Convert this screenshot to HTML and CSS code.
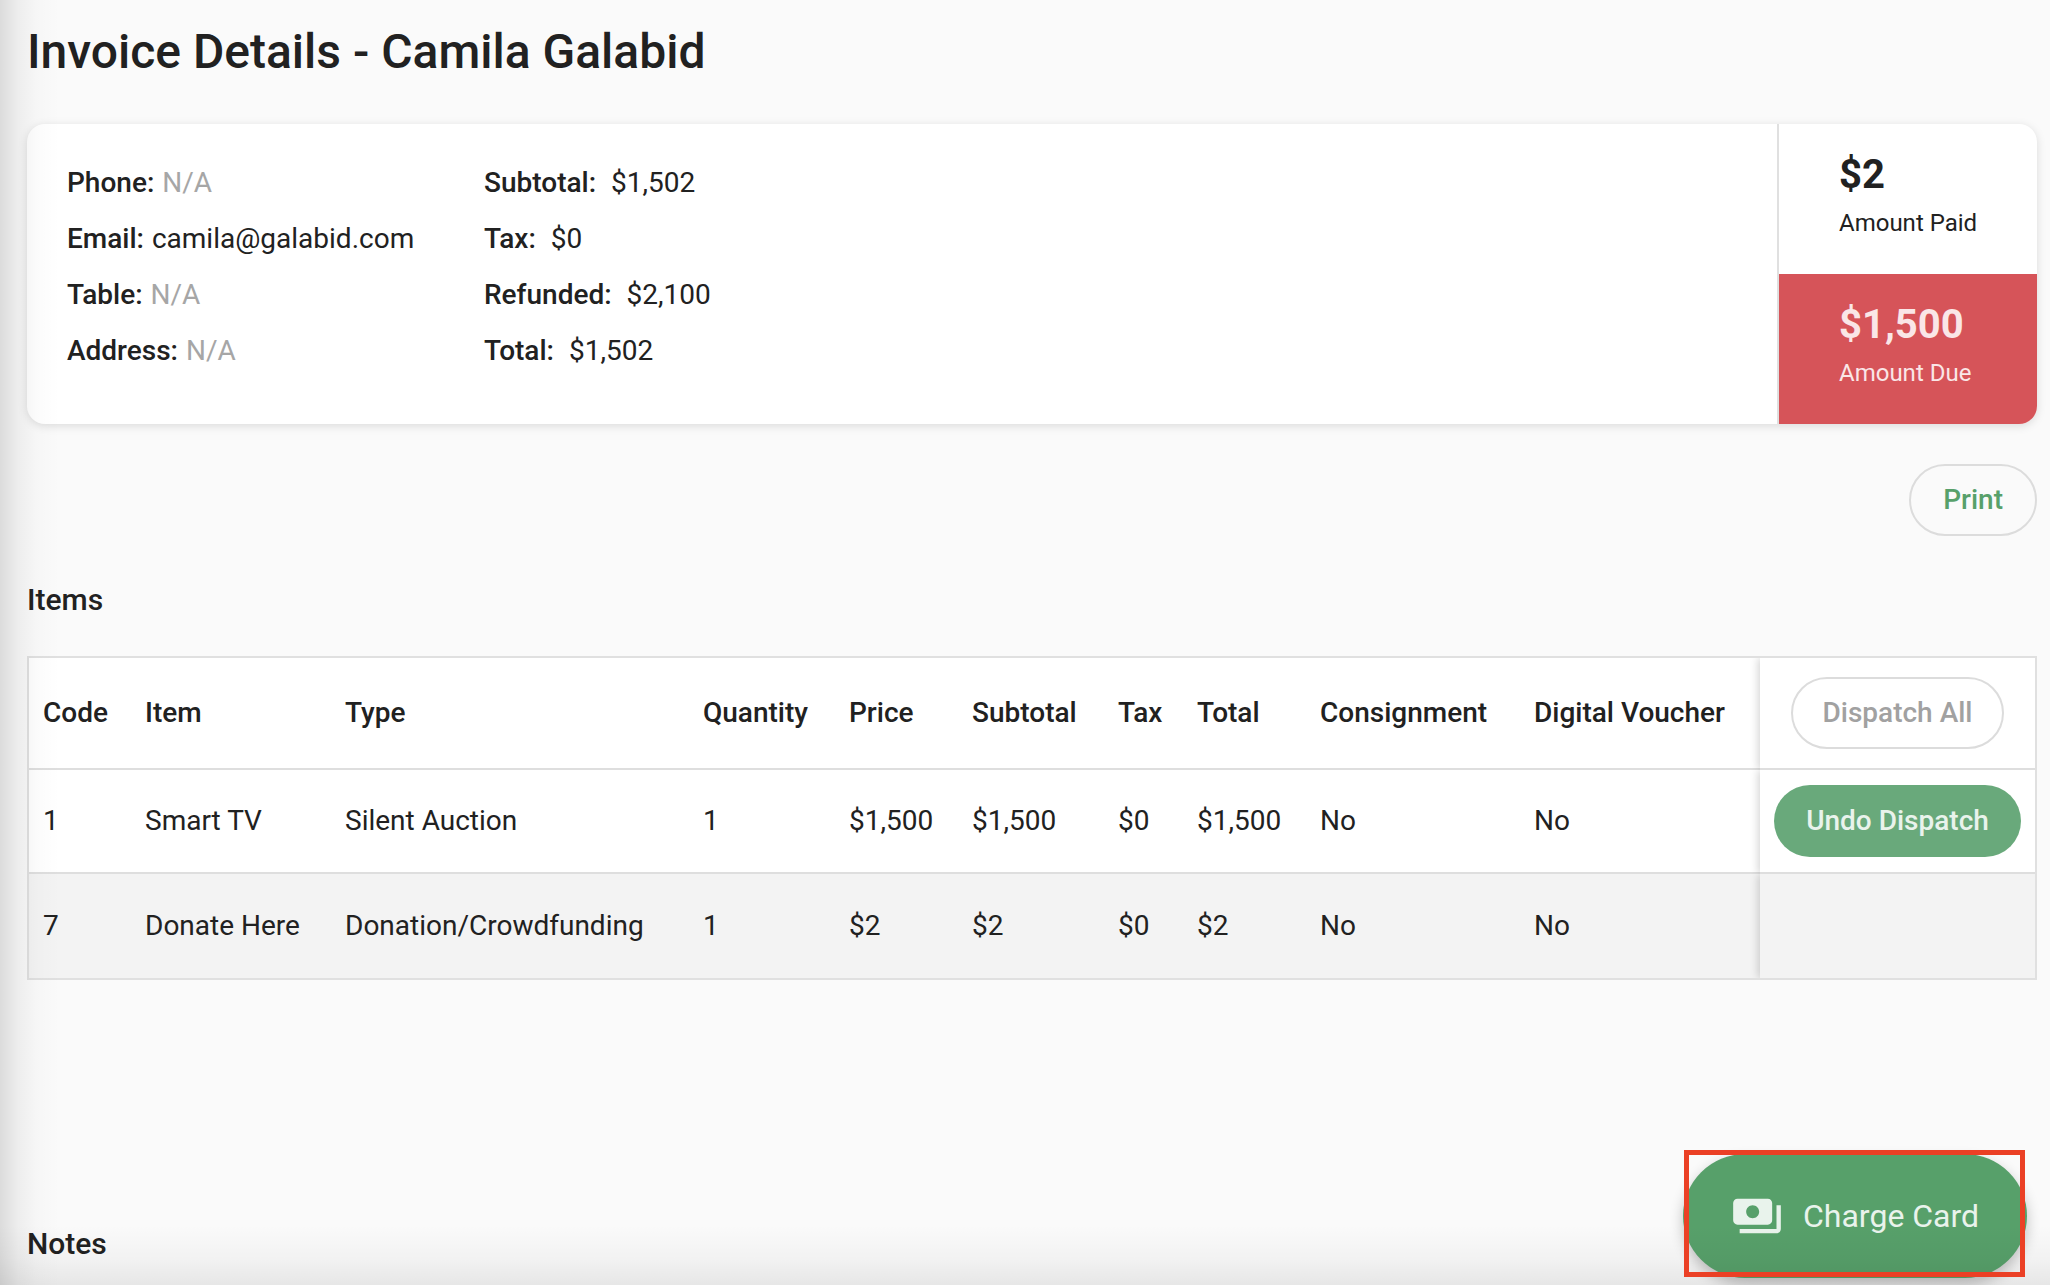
FILE: index.html
```html
<!DOCTYPE html>
<html lang="en">
  <head>
    <meta charset="UTF-8" />
    <meta name="viewport" content="width=device-width, initial-scale=1.0" />
    <title>Invoice Details - Camila Galabid</title>
    <link rel="stylesheet" href="styles.css">
  </head>
  <body>
    <main class="page">
      <h1 class="page-title">Invoice Details - Camila Galabid</h1>

      <section class="summary">
        <div class="summary-info">
          <div class="info-col contact">
            <p><strong>Phone:</strong> <span class="empty">N/A</span></p>
            <p><strong>Email:</strong> camila@galabid.com</p>
            <p><strong>Table:</strong> <span class="empty">N/A</span></p>
            <p><strong>Address:</strong> <span class="empty">N/A</span></p>
          </div>
          <div class="info-col totals">
            <p><strong>Subtotal:</strong> $1,502</p>
            <p><strong>Tax:</strong> $0</p>
            <p><strong>Refunded:</strong> $2,100</p>
            <p><strong>Total:</strong> $1,502</p>
          </div>
        </div>
        <div class="amounts">
          <div class="amount">
            <div class="amount-value">$2</div>
            <div class="amount-label">Amount Paid</div>
          </div>
          <div class="amount due">
            <div class="amount-value">$1,500</div>
            <div class="amount-label">Amount Due</div>
          </div>
        </div>
      </section>

      <div class="actions">
        <button class="btn btn-outline">Print</button>
      </div>

      <h2 class="section-title">Items</h2>
      <table class="items">
        <colgroup>
          <col class="col-code">
          <col class="col-item">
          <col class="col-type">
          <col class="col-quantity">
          <col class="col-price">
          <col class="col-subtotal">
          <col class="col-tax">
          <col class="col-total">
          <col class="col-consignment">
          <col class="col-voucher">
          <col class="col-action">
        </colgroup>
        <thead>
          <tr>
            <th>Code</th>
            <th>Item</th>
            <th>Type</th>
            <th>Quantity</th>
            <th>Price</th>
            <th>Subtotal</th>
            <th>Tax</th>
            <th>Total</th>
            <th>Consignment</th>
            <th>Digital Voucher</th>
            <th class="sticky"><button class="btn btn-outline" disabled>Dispatch All</button></th>
          </tr>
        </thead>
        <tbody>
          <tr>
            <td>1</td>
            <td>Smart TV</td>
            <td>Silent Auction</td>
            <td>1</td>
            <td>$1,500</td>
            <td>$1,500</td>
            <td>$0</td>
            <td>$1,500</td>
            <td>No</td>
            <td>No</td>
            <td class="sticky"><button class="btn btn-filled">Undo Dispatch</button></td>
          </tr>
          <tr>
            <td>7</td>
            <td>Donate Here</td>
            <td>Donation/Crowdfunding</td>
            <td>1</td>
            <td>$2</td>
            <td>$2</td>
            <td>$0</td>
            <td>$2</td>
            <td>No</td>
            <td>No</td>
            <td class="sticky"></td>
          </tr>
        </tbody>
      </table>

      <h2 class="section-title notes">Notes</h2>
    </main>

    <button class="fab">
      <svg class="fab-icon" viewBox="0 0 24 24" fill="currentColor">
        <path d="M19 14V6c0-1.1-.9-2-2-2H3c-1.1 0-2 .9-2 2v8c0 1.1.9 2 2 2h14c1.1 0 2-.9 2-2zm-9-1c-1.66 0-3-1.34-3-3s1.34-3 3-3 3 1.34 3 3-1.34 3-3 3zm13-6v11c0 1.1-.9 2-2 2H4v-2h17V7h2z"/>
      </svg>
      Charge Card
    </button>

    <div class="edge-shadow left"></div>
    <div class="edge-shadow bottom"></div>
    <div class="highlight"></div>
  </body>
</html>
```
FILE: styles.css
```css
* {
  box-sizing: border-box;
}
body {
  margin: 0;
  height: 1285px;
  overflow: hidden;
  background: #fafafa;
  color: #212121;
  font-family: Roboto, "Liberation Sans", sans-serif;
  font-size: 28px;
}
h1, h2, p {
  margin: 0;
}
strong {
  font-weight: 500;
}
.page {
  padding: 20px 13px 0 27px;
}
.page-title {
  font-size: 48px;
  line-height: 64px;
  font-weight: 500;
}

/* summary card */
.summary {
  display: flex;
  height: 300px;
  margin-top: 40px;
  background: #fff;
  border-radius: 18px;
  box-shadow: 0 2px 10px rgba(0, 0, 0, 0.13);
  overflow: hidden;
}
.summary-info {
  display: flex;
  flex: 1;
  padding: 31px 40px 29px;
}
.info-col {
  line-height: 56px;
  white-space: nowrap;
}
.contact {
  width: 417px;
}
.contact strong {
  margin-right: 1px;
}
.totals strong {
  margin-right: 8px;
}
.empty {
  color: #a6a6a6;
}
.amounts {
  width: 260px;
  border-left: 2px solid #e0e0e0;
}
.amount {
  height: 150px;
  padding: 25px 60px 0;
}
.amount-value {
  font-size: 40px;
  line-height: 52px;
  font-weight: 700;
}
.amount-label {
  margin-top: 6px;
  font-size: 24px;
  line-height: 32px;
  white-space: nowrap;
}
.due {
  background: #d65459;
  color: #fae6e7;
}

/* buttons */
.btn {
  height: 72px;
  padding: 0 32px 2px;
  border: 2px solid transparent;
  border-radius: 36px;
  background: transparent;
  font-family: inherit;
  font-size: 28px;
  font-weight: 500;
  white-space: nowrap;
}
.btn-outline {
  border-color: #dcdcdc;
  color: #57a06a;
}
.btn-outline:disabled {
  padding: 0 30px 2px;
  color: #a1a1a1;
}
.btn-filled {
  background: #69a97b;
  border: none;
  color: #e9f3ec;
}
.actions {
  display: flex;
  justify-content: flex-end;
  margin-top: 40px;
}
.section-title {
  margin-top: 44px;
  font-size: 30px;
  line-height: 40px;
  font-weight: 500;
}

/* items table */
.items {
  width: 2010px;
  margin-top: 36px;
  table-layout: fixed;
  border-spacing: 0;
  border: 2px solid #e0e0e0;
  background: #fff;
}
.items th,
.items td {
  height: 104px;
  padding: 0 0 2px 14px;
  border-bottom: 2px solid #dedede;
  text-align: left;
  white-space: nowrap;
}
.items th {
  height: 112px;
  font-weight: 500;
}
.items tbody tr:last-child td {
  border-bottom: none;
  background: #f3f3f3;
}
.items .sticky {
  padding: 0;
  text-align: center;
  box-shadow: -2px 0 8px rgba(0, 0, 0, 0.17);
  clip-path: inset(0 0 0 -12px);
}
.col-code { width: 102px; }
.col-item { width: 200px; }
.col-type { width: 358px; }
.col-quantity { width: 146px; }
.col-price { width: 123px; }
.col-subtotal { width: 146px; }
.col-tax { width: 79px; }
.col-total { width: 123px; }
.col-consignment { width: 214px; }
.col-voucher { width: 240px; }
.col-action { width: 275px; }

.notes {
  margin-top: 244px;
}

/* floating charge button */
.fab {
  position: absolute;
  left: 1683px;
  top: 1154px;
  display: flex;
  align-items: center;
  gap: 20px;
  width: 344px;
  height: 124px;
  padding: 0 0 0 48px;
  border: none;
  border-radius: 62px;
  background: #57a06a;
  color: #e9f3ec;
  font-family: inherit;
  font-size: 32px;
  white-space: nowrap;
  box-shadow: 0 6px 14px rgba(0, 0, 0, 0.24);
}
.fab-icon {
  width: 52px;
  height: 52px;
}
.highlight {
  position: absolute;
  left: 1684px;
  top: 1150px;
  width: 341px;
  height: 127px;
  border: 5px solid #eb4025;
}

.edge-shadow {
  position: absolute;
  left: 0;
  bottom: 0;
  pointer-events: none;
}
.left {
  top: 0;
  width: 60px;
  background: linear-gradient(to right, rgba(0, 0, 0, 0.12), rgba(0, 0, 0, 0.05) 30%, rgba(0, 0, 0, 0.015) 60%, transparent);
}
.bottom {
  right: 0;
  height: 60px;
  background: linear-gradient(to top, rgba(0, 0, 0, 0.08), rgba(0, 0, 0, 0.03) 45%, transparent);
}
```
